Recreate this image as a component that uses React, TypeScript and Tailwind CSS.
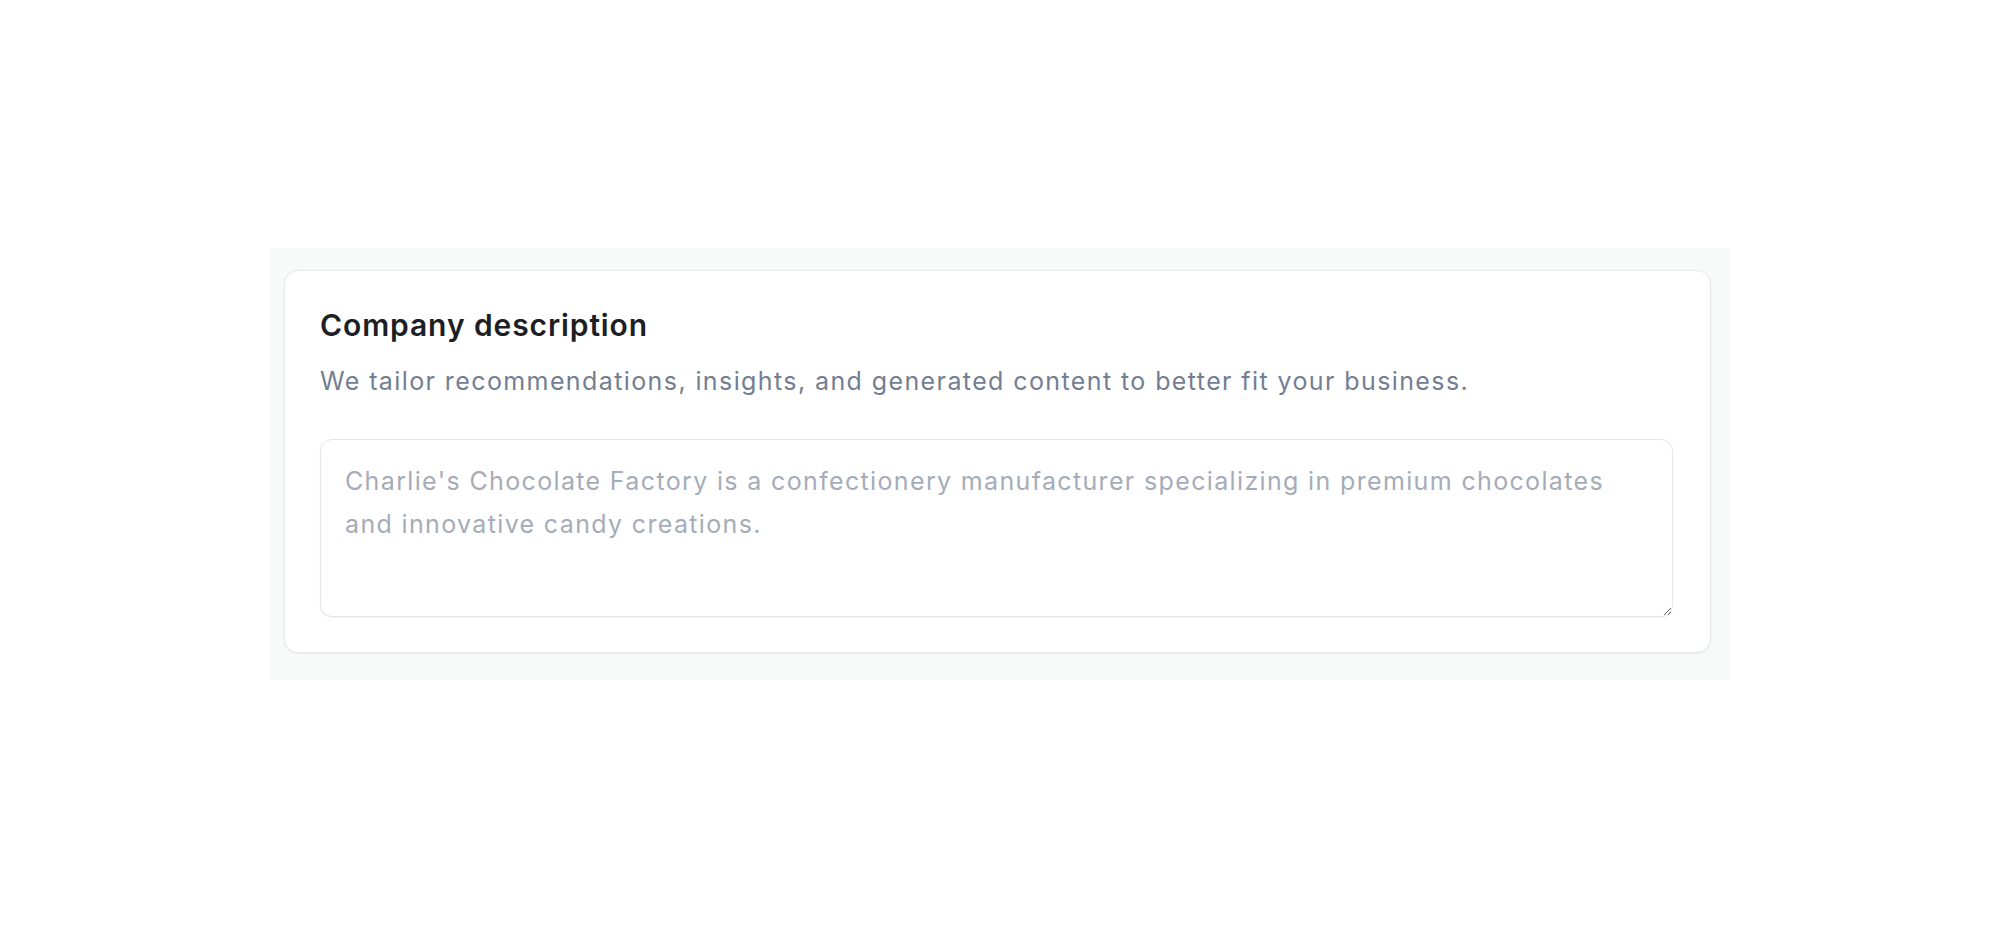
export default function App() {
  return (
    <div className="min-h-screen w-full bg-white font-['Inter',sans-serif]">
      <div className="pt-[248px] pl-[270px]">
        <div className="w-[1460px] h-[432px] bg-[#f8f9f9] pl-[14px] pr-[19px] pt-[22px]">
          <div className="rounded-[14px] border border-[#e7e8ea] bg-white shadow-[0_1px_2px_rgba(16,24,40,0.06)] pl-[35px] pr-[37px] pt-[36px] pb-[35px]">
            <h2 className="text-[30px] leading-[36px] font-semibold tracking-[0.9px] text-[#1d1f24]">
              Company description
            </h2>
            <p className="mt-[22px] text-[25px] leading-[32px] tracking-[1.4px] text-[#737e92]">
              We tailor recommendations, insights, and generated content to better fit your business.
            </p>
            <textarea
              className="mt-[42px] block w-full h-[178px] rounded-[12px] border border-[#e3e5e8] bg-white px-[24px] pt-[20px] pb-[18px] text-[25px] leading-[43px] tracking-[1.35px] text-[#1d1f24] placeholder:text-[#a5acb8] outline-none shadow-[0_1px_2px_rgba(16,24,40,0.04)]"
              placeholder="Charlie's Chocolate Factory is a confectionery manufacturer specializing in premium chocolates and innovative candy creations."
            />
          </div>
        </div>
      </div>
    </div>
  )
}
